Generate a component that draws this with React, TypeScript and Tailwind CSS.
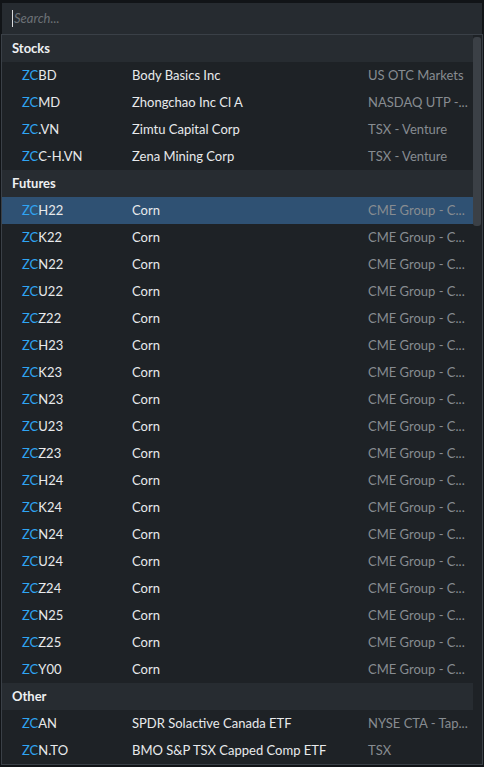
import React from "react";

type Row = { sym: string; name: string; ex: string; sel?: boolean };

const stocks: Row[] = [
  { sym: "BD", name: "Body Basics Inc", ex: "US OTC Markets" },
  { sym: "MD", name: "Zhongchao Inc Cl A", ex: "NASDAQ UTP -..." },
  { sym: ".VN", name: "Zimtu Capital Corp", ex: "TSX - Venture" },
  { sym: "C-H.VN", name: "Zena Mining Corp", ex: "TSX - Venture" },
];

const futCodes = ["H22","K22","N22","U22","Z22","H23","K23","N23","U23","Z23","H24","K24","N24","U24","Z24","N25","Z25","Y00"];
const futures: Row[] = futCodes.map((c, i) => ({ sym: c, name: "Corn", ex: "CME Group - C...", sel: i === 0 }));

const other: Row[] = [
  { sym: "AN", name: "SPDR Solactive Canada ETF", ex: "NYSE CTA - Tap..." },
  { sym: "N.TO", name: "BMO S&P TSX Capped Comp ETF", ex: "TSX" },
];

function Header({ title }: { title: string }) {
  return (
    <div className="h-[27px] flex items-center pl-[10px] bg-[#272c31] text-[13px] font-bold text-[#eef0f2]">
      {title}
    </div>
  );
}

function Item({ r }: { r: Row }) {
  return (
    <div
      className={`h-[27px] grid grid-cols-[110px_236px_1fr] items-center pl-5 pr-[2px] text-[13px] ${
        r.sel ? "bg-[#2f5173]" : ""
      }`}
    >
      <div className="whitespace-nowrap">
        <span className="text-[#2fa5f3]">ZC</span>
        <span className="text-[#e8eaec]">{r.sym}</span>
      </div>
      <div className="text-[#e8eaec] whitespace-nowrap">{r.name}</div>
      <div className="text-[#878c91] whitespace-nowrap">{r.ex}</div>
    </div>
  );
}

export default function App() {
  return (
    <div
      className="w-[484px] h-[767px] bg-[#111417] pt-[3px] px-[1px] overflow-hidden"
      style={{ fontFamily: "Lato, 'Open Sans', sans-serif" }}
    >
      <div className="h-[31px] mx-[1px] bg-[#262b30] flex items-center pl-[10px]">
        <div className="w-[1px] h-[17px] bg-[#d8dadc]" />
        <span className="ml-[1px] text-[13px] italic text-[#6c7176]">Search...</span>
      </div>
      <div className="border border-[#3a4047] bg-[#1e2226] flex h-[731px]">
        <div className="flex-1 flex flex-col">
          <Header title="Stocks" />
          {stocks.map((r) => (
            <Item key={r.sym} r={r} />
          ))}
          <Header title="Futures" />
          {futures.map((r) => (
            <Item key={r.sym} r={r} />
          ))}
          <Header title="Other" />
          {other.map((r) => (
            <Item key={r.sym} r={r} />
          ))}
        </div>
        <div className="w-[9px] pt-[2px] pr-[1px]">
          <div className="h-[189px] w-[8px] rounded-[3px] bg-[#3b4046]" />
        </div>
      </div>
    </div>
  );
}
